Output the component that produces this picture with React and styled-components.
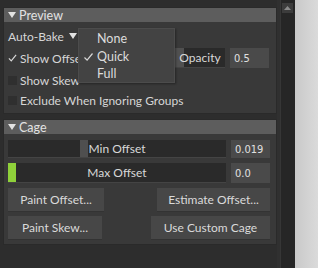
import React from "react";
import styled, { createGlobalStyle } from "styled-components";

const Global = createGlobalStyle`
  html, body { margin: 0; padding: 0; background: #2b2b2b; }
  body { font-family: "Lato", "Liberation Sans", sans-serif; font-size: 12px; color: #d6d6d6; }
`;

const Window = styled.div`
  width: 318px;
  height: 268px;
  display: flex;
  background: #2d2d2d;
  overflow: hidden;
`;

const Scroller = styled.div`
  width: 274px;
  padding: 7px 0 0 3px;
  display: flex;
  flex-direction: column;
  gap: 5px;
  position: relative;
`;

const Gutter = styled.div`
  width: 3px;
  background: #303030;
`;

const ScrollBar = styled.div`
  width: 15px;
  background: #262626;
  border-left: 1px solid #363636;
  padding: 3px 0 0 1px;
  box-sizing: border-box;
`;

const ScrollArrow = styled.div`
  width: 11px;
  height: 10px;
  background: #3c3c3c;
  display: flex;
  align-items: center;
  justify-content: center;
`;

const Light = styled.div`
  flex: 1;
  background: linear-gradient(90deg, #c9c9c9, #dadada);
`;

const Section = styled.div`
  background: #393939;
  border: 1px solid #2a2a2a;
  display: flex;
  flex-direction: column;
`;

const Header = styled.div`
  height: 14px;
  background: #5d5d5d;
  display: flex;
  align-items: center;
  gap: 3px;
  padding-left: 4px;
  font-size: 12.5px;
  color: #e2e2e2;
`;

const Tri = styled.span`
  width: 0;
  height: 0;
  border-left: 4px solid transparent;
  border-right: 4px solid transparent;
  border-top: 6px solid ${(p) => p.$color || "#e2e2e2"};
`;

const Body = styled.div`
  display: flex;
  flex-direction: column;
  padding: ${(p) => p.$pad};
`;

const Row = styled.div`
  display: flex;
  align-items: center;
  height: ${(p) => p.$h}px;
  margin-top: ${(p) => p.$mt || 0}px;
  padding-left: 4px;
`;

const DropLabel = styled.div`
  display: flex;
  align-items: center;
  gap: 5px;
`;

const Check = styled.span`
  width: 9px;
  height: 9px;
  background: ${(p) => (p.$on ? "transparent" : "#2f2f2f")};
  display: inline-flex;
  align-items: center;
  justify-content: center;
  margin-right: 3px;
`;

const Spacer = styled.div`
  flex: 1;
`;

const Slider = styled.div`
  width: ${(p) => p.$w}px;
  height: 100%;
  background: #2a2a2a;
  border-bottom: 1px solid #444;
  box-sizing: border-box;
  position: relative;
  display: flex;
  align-items: center;
  justify-content: center;
`;

const Handle = styled.div`
  position: absolute;
  top: 0;
  bottom: 0;
  width: ${(p) => p.$w}px;
  background: ${(p) => p.$c};
`;

const SliderText = styled.span`
  position: relative;
  color: #d8d8d8;
`;

const Field = styled.div`
  width: 39px;
  height: 100%;
  background: #4a4a4a;
  box-sizing: border-box;
  padding-left: 4px;
  display: flex;
  align-items: center;
  margin: 0 ${(p) => p.$mr || 0}px 0 5px;
  color: #e0e0e0;
  font-family: "DejaVu Sans Condensed", "DejaVu Sans", sans-serif;
  font-size: 11px;
`;

const ButtonRow = styled.div`
  display: flex;
  justify-content: space-between;
  margin: ${(p) => p.$mt}px 0 0 4px;
  width: 262px;
`;

const Button = styled.div`
  width: ${(p) => p.$w}px;
  height: 24px;
  background: #474747;
  border-bottom: 1px solid #333;
  box-sizing: border-box;
  display: flex;
  align-items: center;
  justify-content: center;
  color: #dadada;
`;

const Menu = styled.div`
  position: absolute;
  left: 78px;
  top: 28px;
  width: 97px;
  height: 55px;
  background: #434343;
  border: 1px solid #4c4c4c;
  box-sizing: border-box;
  padding-top: 1px;
  box-shadow: 1px 1px 2px rgba(0, 0, 0, 0.35);
`;

const MenuItem = styled.div`
  height: 17.5px;
  display: flex;
  align-items: center;
  padding-left: 18px;
  position: relative;
  font-size: 12.5px;
  color: #dcdcdc;
`;

const MenuCheck = styled.svg`
  position: absolute;
  left: 4px;
  top: 4px;
`;

const Tick = ({ size = 10 }) => (
  <svg width={size} height={size} viewBox="0 0 10 10">
    <path d="M1 5.5 L3.6 8.2 L9 1.5" stroke="#d8d8d8" strokeWidth="1.3" fill="none" />
  </svg>
);

export default function App() {
  return (
    <>
      <Global />
      <Window>
        <Scroller>
          <Section>
            <Header>
              <Tri />
              Preview
            </Header>
            <Body $pad="6px 0 4px 0">
              <Row $h={16}>
                <DropLabel>
                  Auto-Bake
                  <Tri />
                </DropLabel>
              </Row>
              <Row $h={20} $mt={4}>
                <Check $on>
                  <Tick />
                </Check>
                Show Offset
                <Spacer />
                <Slider $w={50}>
                  <Handle $w={9} $c="#505050" style={{ left: 0 }} />
                  <SliderText>Opacity</SliderText>
                </Slider>
                <Field $mr={7}>0.5</Field>
              </Row>
              <Row $h={18} $mt={3}>
                <Check />
                Show Skew
              </Row>
              <Row $h={18} $mt={2}>
                <Check />
                Exclude When Ignoring Groups
              </Row>
            </Body>
          </Section>
          <Section>
            <Header>
              <Tri />
              Cage
            </Header>
            <Body $pad="6px 0 4px 0">
              <Row $h={18}>
                <Slider $w={218}>
                  <Handle $w={8} $c="#4f4f4f" style={{ left: 72 }} />
                  <SliderText>Min Offset</SliderText>
                </Slider>
                <Field>0.019</Field>
              </Row>
              <Row $h={20} $mt={5}>
                <Slider $w={218}>
                  <Handle $w={8} $c="#8fd13a" style={{ left: 0 }} />
                  <SliderText>Max Offset</SliderText>
                </Slider>
                <Field>0.0</Field>
              </Row>
              <ButtonRow $mt={5}>
                <Button $w={96}>Paint Offset...</Button>
                <Button $w={113}>Estimate Offset...</Button>
              </ButtonRow>
              <ButtonRow $mt={4}>
                <Button $w={94}>Paint Skew...</Button>
                <Button $w={119}>Use Custom Cage</Button>
              </ButtonRow>
            </Body>
          </Section>
          <Menu>
            <MenuItem>None</MenuItem>
            <MenuItem>
              <MenuCheck width="11" height="10" viewBox="0 0 10 10">
                <path d="M1 5.5 L3.6 8.2 L9 1.5" stroke="#d8d8d8" strokeWidth="1.2" fill="none" />
              </MenuCheck>
              Quick
            </MenuItem>
            <MenuItem>Full</MenuItem>
          </Menu>
        </Scroller>
        <Gutter />
        <ScrollBar>
          <ScrollArrow>
            <svg width="7" height="4" viewBox="0 0 7 4">
              <path d="M0 4 L3.5 0 L7 4 Z" fill="#8a8a8a" />
            </svg>
          </ScrollArrow>
        </ScrollBar>
        <Light />
      </Window>
    </>
  );
}
